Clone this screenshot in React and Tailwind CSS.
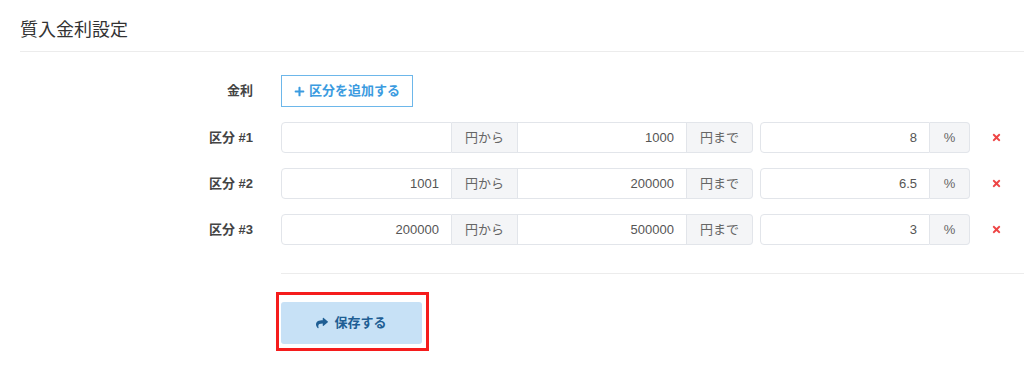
import React from "react";
import { FaPlus, FaShare, FaTimes } from "react-icons/fa";

const font = { fontFamily: '"Liberation Sans", "Noto Sans CJK JP", sans-serif' };

const rows = [
  { label: "区分 #1", from: "", to: "1000", rate: "8" },
  { label: "区分 #2", from: "1001", to: "200000", rate: "6.5" },
  { label: "区分 #3", from: "200000", to: "500000", rate: "3" },
];

const Label = ({ children }) => (
  <div className="w-[233px] shrink-0 text-right text-[13px] font-bold text-[#444]">
    {children}
  </div>
);

const Input = ({ value, w }) => (
  <div className={`${w} h-[31px] flex items-center justify-end px-3 text-[13px] text-[#555] bg-white border border-[#e2e5ea]`}>
    {value}
  </div>
);

const Addon = ({ children, w, last }) => (
  <div
    className={`${w} h-[31px] flex items-center justify-center text-[13px] text-[#666] bg-[#f4f5f7] border-y border-[#e2e5ea] ${
      last ? "border-r rounded-r" : ""
    }`}
  >
    {children}
  </div>
);

export default function App() {
  return (
    <div className="w-[1024px] h-[371px] bg-white pl-5" style={font}>
      <div className="pt-[17px] pb-[7px] text-[18px] text-[#333]">質入金利設定</div>
      <div className="h-px bg-[#ececec]" />

      <div className="flex items-center mt-[23px]">
        <Label>金利</Label>
        <button className="ml-[28px] w-[132px] h-[32px] flex items-center justify-center gap-1 border border-[#6db7ea] text-[#3b9be0] text-[13px] font-bold bg-white">
          <FaPlus className="w-[11px] h-[11px]" />
          区分を追加する
        </button>
      </div>

      <div className="flex flex-col gap-[15px] mt-[15px]">
        {rows.map((r) => (
          <div key={r.label} className="flex items-center">
            <Label>{r.label}</Label>
            <div className="ml-[28px] flex">
              <Input value={r.from} w="w-[171px] rounded-l" />
              <Addon w="w-[65px]">円から</Addon>
              <Input value={r.to} w="w-[170px]" />
              <Addon w="w-[66px]" last>
                円まで
              </Addon>
            </div>
            <div className="ml-[7px] flex">
              <Input value={r.rate} w="w-[170px] rounded-l" />
              <Addon w="w-[40px]" last>
                %
              </Addon>
            </div>
            <FaTimes className="ml-[21px] w-[11px] h-[11px] text-[#ee4545]" />
          </div>
        ))}
      </div>

      <div className="ml-[261px] mt-[28px] h-px bg-[#ececec]" />

      <div className="ml-[256px] mt-[18px] w-[153px] border-[3px] border-[#f51c1c] pl-[2px] pr-[4px] pt-[7px] pb-[4px]">
        <button className="w-[141px] h-[42px] flex items-center justify-center gap-[6px] rounded-[3px] bg-[#c7e1f6] text-[#1e5e94] text-[13px] font-bold">
          <FaShare className="w-[12px] h-[12px]" />
          保存する
        </button>
      </div>
    </div>
  );
}
